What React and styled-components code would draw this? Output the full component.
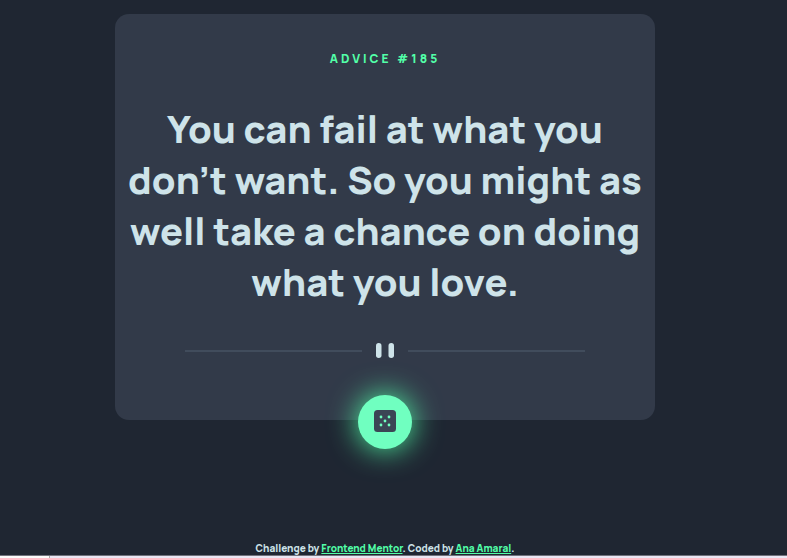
import React, { useState } from "react";
import styled, { createGlobalStyle } from "styled-components";

const GlobalStyle = createGlobalStyle`
  * { box-sizing: border-box; }
  body {
    margin: 0;
    background: #1f2632;
    color: #cee3e9;
    font-family: Manrope, Inter, sans-serif;
    overflow-x: hidden;
  }
`;

const Page = styled.div`
  display: flex;
  flex-direction: column;
  min-height: 100vh;
`;

const Main = styled.main`
  flex: 1;
  display: flex;
  flex-direction: column;
  align-items: center;
  padding: 14px 17px 0 0;
`;

const Card = styled.section`
  display: flex;
  flex-direction: column;
  align-items: center;
  width: 100%;
  max-width: 540px;
  padding: 36px 12px 0;
  border-radius: 14px;
  background: #323a49;
  text-align: center;
`;

const Title = styled.h1`
  margin: 0;
  color: #52ffa8;
  font-size: 12px;
  line-height: 18px;
  font-weight: 800;
  letter-spacing: 3px;
  text-transform: uppercase;
`;

const Quote = styled.p`
  margin: 35px 0 0;
  font-size: 38px;
  line-height: 51px;
  font-weight: 800;
`;

const Divider = styled.svg`
  display: block;
  width: 400px;
  max-width: 100%;
  height: 16px;
  margin-top: 36px;
`;

const DiceButton = styled.button`
  display: grid;
  place-items: center;
  width: 54px;
  height: 54px;
  margin: 36px 0 -29px;
  padding: 0 0 2px;
  border: 0;
  border-radius: 50%;
  background: #70ffc0;
  box-shadow: 0 0 30px #52ffa8;
  cursor: pointer;
`;

const Footer = styled.footer`
  padding: 0 17px 0 0;
  font-size: 10px;
  line-height: 14px;
  font-weight: 800;
  text-align: center;
`;

const Link = styled.a`
  color: #52ffa8;
  text-decoration: underline;
`;

const Strip = styled.div`
  display: flex;
  height: 3px;
  border-top: 1px solid #70727c;
  background: #e9e6f3;
`;

const StripTab = styled.div`
  width: 50px;
  background: #fafafa;
  border-right: 1px solid #aaa;
`;

const pips = [[7, 7], [15, 7], [11, 11], [7, 15], [15, 15]];

function DiceIcon() {
  return (
    <svg width="22" height="22" viewBox="0 0 22 22" aria-hidden="true">
      <rect width="22" height="22" rx="3.5" fill="#3b4555" />
      {pips.map(([x, y]) => (
        <circle key={`${x}-${y}`} cx={x} cy={y} r="1.4" fill="#70ffc0" />
      ))}
    </svg>
  );
}

const advice = {
  id: 185,
  text: "You can fail at what you don’t want. So you might as well take a chance on doing what you love.",
};

export default function App() {
  const [current, setCurrent] = useState(advice);
  return (
    <Page>
      <GlobalStyle />
      <Main>
        <Card>
          <Title>Advice #{current.id}</Title>
          <Quote>{current.text}</Quote>
          <Divider viewBox="0 0 400 16" aria-hidden="true">
            <path d="M0 7h177v2H0zM223 7h177v2H223z" fill="#414c5c" />
            <rect x="191" y="0" width="5.5" height="15" rx="2.7" fill="#cee3e9" />
            <rect x="203.5" y="0" width="5.5" height="15" rx="2.7" fill="#cee3e9" />
          </Divider>
          <DiceButton
            type="button"
            aria-label="New advice"
            onClick={() => setCurrent({ ...advice })}
          >
            <DiceIcon />
          </DiceButton>
        </Card>
      </Main>
      <Footer>
        Challenge by <Link href="https://www.frontendmentor.io">Frontend Mentor</Link>. Coded
        by <Link href="#">Ana Amaral</Link>.
      </Footer>
      <Strip>
        <StripTab />
      </Strip>
    </Page>
  );
}
